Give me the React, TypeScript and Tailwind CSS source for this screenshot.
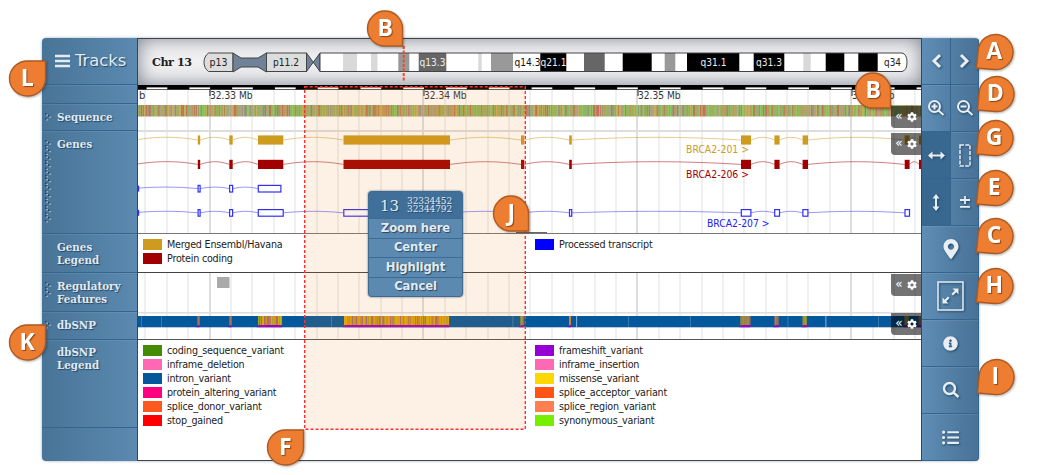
import React from "react";
import { FaMapMarkerAlt, FaInfoCircle, FaListUl, FaCog } from "react-icons/fa";

const SANS = "font-['DejaVu_Sans',sans-serif]";
const GRID = Array.from({ length: 37 }, (_, i) => ({ x: 145.4 + i * 21.39, major: i % 10 === 3 }));

// Small integer hash, gives an even spread for the base and variant stripes.
function spread(n: number, size: number) {
  let h = Math.imul(n + 17, 0x9e3779b1);
  h ^= h >>> 15;
  h = Math.imul(h, 0x85ebca6b);
  h ^= h >>> 13;
  return (h >>> 0) % size;
}

function Grid({ y, h }: { y: number; h: number }) {
  return (
    <g>
      {GRID.map((g) => (
        <rect key={g.x} x={Math.round(g.x) - 0.5} y={y} width={1} height={h} fill={g.major ? "#bcbcbc" : "#e2e2e2"} />
      ))}
    </g>
  );
}

function Canvas({ y, h, children }: { y: number; h: number; children?: React.ReactNode }) {
  return (
    <svg className="block" width={784} height={h} viewBox={`138 ${y} 784 ${h}`}>
      {children}
    </svg>
  );
}

const BANDS: [number, number, string][] = [
  [343, 357, "#d9d9d9"], [371, 377.5, "#d9d9d9"], [398.3, 409.3, "#999"], [418.7, 446.3, "#666"],
  [478.3, 481.7, "#d9d9d9"], [491, 513, "#999"], [540.3, 566.3, "#000"], [584, 604.7, "#666"],
  [622.7, 651.7, "#000"], [664.7, 675.3, "#999"], [687, 739.3, "#000"], [753.7, 784.3, "#000"],
  [803.3, 810.7, "#d9d9d9"], [825.7, 844.3, "#000"], [858.3, 877.7, "#000"],
];

const BAND_LABELS: [number, string, string][] = [
  [218.5, "p13", "#222"], [286, "p11.2", "#222"], [432.5, "q13.3", "#eee"], [527.5, "q14.3", "#111"],
  [553.5, "q21.1", "#eee"], [713.5, "q31.1", "#eee"], [769, "q31.3", "#eee"], [892.5, "q34", "#222"],
];

function Chromosome() {
  return (
    <Canvas y={38} h={47}>
      <text x={152} y={66} fontSize={11.2} fontWeight="bold" fontFamily="DejaVu Serif" fill="#222" textLength={40}>Chr 13</text>
      <path d="M208.500 53H233V71.500H208.500Q204 68 204 62.200Q204 56.500 208.500 53Z" fill="#ddd" stroke="#444" />
      <path d="M233 53L241 58H258L266.500 53V72L258 67H241L233 72Z" fill="#6f8297" stroke="#444" />
      <rect x={266.5} y={53} width={40} height={18.5} fill="#ddd" stroke="#444" />
      <path d="M306.500 53L320 71.500V53L306.500 71.500Z" fill="#6f8297" stroke="#444" />
      <path d="M320 53H902Q907 54 907 62.200Q907 70.500 902 71.500H320Z" fill="#fff" />
      {BANDS.map(([a, b, c]) => <rect key={a} x={a} y={53} width={b - a} height={18.5} fill={c} />)}
      <path d="M320 53H902Q907 54 907 62.200Q907 70.500 902 71.500H320Z" fill="none" stroke="#444" />
      {BAND_LABELS.map(([x, t, c]) => (
        <text key={t} x={x} y={65.5} fontSize={10} fontFamily="DejaVu Sans" fill={c} textAnchor="middle" textLength={t.length === 5 ? 26 : t === "p13" ? 18 : 17} lengthAdjust="spacingAndGlyphs">{t}</text>
      ))}
      <path d="M403.700 46V82" stroke="#f04a2a" strokeWidth={2} strokeDasharray="3 1.500" />
    </Canvas>
  );
}

const SEQ = ["#9cb45c", "#b99a5a", "#8fb85e", "#bd8158", "#a1ab6a", "#b0a08a", "#93b066", "#c1b15c", "#c5705e", "#9a9a7a", "#8fc862", "#b0a860"];

function Ruler() {
  return (
    <Canvas y={85} h={46}>
      <Grid y={90} h={41} />
      <rect x={138} y={85} width={784} height={4.8} fill="#000" />
      {Array.from({ length: 19 }, (_, i) => (
        <rect key={i} x={146.6 + i * 42.78} y={87.4} width={20.7} height={1.8} fill="#fff" />
      ))}
      {[[210, "32.33 Mb"], [424, "32.34 Mb"], [638, "32.35 Mb"], [852, "32.36 Mb"]].map(([x, t]) => (
        <g key={t}>
          <rect x={Number(x) - 0.5} y={89} width={1} height={7} fill="#222" />
          <text x={x} y={99} fontSize={10} fontFamily="DejaVu Sans" fill="#333" textLength={42.500} lengthAdjust="spacingAndGlyphs">{t}</text>
        </g>
      ))}
      <text x={139} y={99} fontSize={10} fontFamily="DejaVu Sans" fill="#333">b</text>
      {Array.from({ length: 784 }, (_, i) => (
        <rect key={i} x={138 + i} y={105} width={1.05} height={11.5} fill={SEQ[spread(i, SEQ.length)]} />
      ))}
      <rect x={138} y={130} width={784} height={1} fill="#ddd" />
    </Canvas>
  );
}

const EXONS: [number, number][] = [
  [197.8, 200.2], [229.3, 232.7], [258, 283.3], [343.5, 450], [521, 524.2], [569.2, 571.8],
  [741, 751], [774.4, 779.6], [802.6, 808], [904.7, 909.6], [919, 922],
];

function Transcript({ y, color, exons, outline }: { y: number; color: string; exons: [number, number][]; outline?: boolean }) {
  let previous = 138;
  return (
    <g>
      {exons.map(([a, b]) => {
        const start = previous;
        previous = b;
        const top = outline ? y - 2 : y - 3.6;
        const from = start === 138 ? y - 0.5 : y;
        return (
          <g key={a}>
            <path d={`M${start} ${from}C${start + (a - start) * 0.35} ${top} ${a - (a - start) * 0.35} ${top} ${a} ${y}`} fill="none" stroke={color} strokeOpacity={0.5} />
            {outline
              ? <rect x={a + 0.3} y={y - 3.2} width={b - a - 0.4} height={6.6} fill="#fff" stroke={color} strokeWidth={1.2} />
              : <rect x={a} y={y - 4.6} width={b - a} height={9.2} fill={color} />}
          </g>
        );
      })}
      {outline && <rect x={138} y={y - 3} width={1.2} height={6} fill={color} />}
    </g>
  );
}

function Genes() {
  return (
    <Canvas y={131} h={103}>
      <Grid y={131} h={102} />
      <rect x={138} y={131} width={784} height={1} fill="#ddd" />
      <Transcript y={140} color="#cd9b1d" exons={EXONS} />
      <Transcript y={164.400} color="#a00000" exons={EXONS} />
      <Transcript y={188.600} color="#3030fa" outline exons={[[197.8, 200.2], [229.3, 232.7], [258, 281]]} />
      <Transcript y={212.800} color="#3030fa" outline exons={EXONS.slice(0, 10)} />
      <g fontSize={10} fontFamily="DejaVu Sans">
        <text x={686} y={153} fill="#cd9b1d" textLength={63} lengthAdjust="spacingAndGlyphs">BRCA2-201 &gt;</text>
        <text x={686} y={177.500} fill="#a00000" textLength={63} lengthAdjust="spacingAndGlyphs">BRCA2-206 &gt;</text>
        <text x={707} y={226.500} fill="#2020fa" textLength={62.500} lengthAdjust="spacingAndGlyphs">BRCA2-207 &gt;</text>
      </g>
      <rect x={516} y={232} width={31} height={2} fill="#666" />
      <rect x={138} y={233} width={784} height={1} fill="#777" />
    </Canvas>
  );
}

function Variants() {
  const clusters: [number, number][] = [[197.5, 199.5], [229.5, 231.5], [258, 282], [344, 449], [520.5, 523.5], [569, 571], [740.5, 750.5], [774.5, 778.7], [802.6, 807], [904.5, 908], [918.5, 922]];
  const shades = ["#dba00e", "#c9b010", "#bd7c4c", "#d99018", "#c58a3c", "#b06a68", "#e0aa08", "#a8a028"];
  return (
    <Canvas y={312} h={28}>
      <Grid y={312} h={27} />
      <rect x={138} y={312} width={784} height={1.500} fill="#ddd" />
      <rect x={138} y={316} width={784} height={11.3} fill="#04589b" />
      {[141, 161, 331, 512.5, 576.3, 628, 690, 787.5, 825.5, 878].map((x, i) => (
        <rect key={x} x={x} y={316} width={0.8} height={11.3} fill="#fff" opacity={i === 4 || i === 8 ? 0.7 : 0.25} />
      ))}
      {clusters.map(([a, b], k) => (
        <g key={a}>
          {Array.from({ length: Math.max(1, Math.round(b - a)) }, (_, i) => (
            <rect key={i} x={a + i} y={316} width={1.05} height={9.5} fill={b - a < 3 ? "#d98030" : shades[spread(i + k * 131, shades.length)]} />
          ))}
          <path d={`M${a - 1.500} 327.300L${a + 1} 325H${b}V327.300Z`} fill="#a200b8" />
        </g>
      ))}
      <rect x={138} y={339} width={784} height={1} fill="#555" />
    </Canvas>
  );
}

function Legend({ items }: { items: [string, string][] }) {
  return (
    <ul className="flex w-[393px] flex-col gap-[3px] pl-[5px] pt-[5px]">
      {items.map(([color, label]) => (
        <li key={label} className="flex h-[11px] items-center gap-[5px]">
          <svg width="19" height="11"><rect width="19" height="11" fill={color} /></svg>
          <span className="whitespace-nowrap text-[9.600px] leading-[11px] tracking-[-0.22px] text-[#222]">{label}</span>
        </li>
      ))}
    </ul>
  );
}

function Grip({ rows }: { rows: number }) {
  return (
    <svg className="absolute left-[3px] top-[9px]" width="8" height={rows * 7.5 + 2}>
      {Array.from({ length: rows }, (_, i) => (
        <g key={i} transform={`translate(0 ${i * 7.5})`}>
          <path d="M0 0h1.500v1.500h-1.500zM3 2h1.500v1.500h-1.500zM0 5h1.500v1.500h-1.500z" fill="#23435f" />
          <path d="M1.500 1.500h1.200v1.200h-1.200zM4.500 3.500h1.200v1.200h-1.200zM1.500 6.300h1.200v1.200h-1.200z" fill="#c5d6e4" />
        </g>
      ))}
    </svg>
  );
}

function TrackLabel({ className, grips = 0, children }: { className: string; grips?: number; children?: React.ReactNode }) {
  return (
    <div className={`relative border-b border-[#32658f] pl-[15px] font-['DejaVu_Serif',serif] text-[10.300px] font-bold leading-[12.5px] text-[#e3eaf0] shadow-[inset_0_1px_0_rgba(255,255,255,0.08)] [text-shadow:1px_1px_1px_#234766] ${className}`}>
      {grips > 0 && <Grip rows={grips} />}
      {children}
    </div>
  );
}

function Controls({ className }: { className: string }) {
  return (
    <div className={`absolute right-0 flex h-[22px] w-[30px] items-center justify-center gap-[4px] rounded-bl-sm bg-black/55 text-white ${className}`}>
      <span className="-mt-[3px] text-[12px] leading-none">«</span>
      <FaCog size={10} />
    </div>
  );
}

function Button({ active, children }: { active?: boolean; children: React.ReactNode }) {
  return (
    <button className={`flex min-w-0 flex-1 items-center justify-center border-b border-r border-[#32658f] pl-px text-[#e8eef3] ${active ? "bg-[#386790]" : "shadow-[inset_0_1px_0_rgba(255,255,255,0.08)]"}`}>
      <span className="[filter:drop-shadow(1px_1px_1px_#234766)]">{children}</span>
    </button>
  );
}

function Stroke({ d, w = 18, h = 18, sw = 2, dash }: { d: string; w?: number; h?: number; sw?: number; dash?: string }) {
  return (
    <svg width={w} height={h} viewBox={`0 0 ${w} ${h}`} className="block">
      <path d={d} fill="none" stroke="currentColor" strokeWidth={sw} strokeDasharray={dash} />
    </svg>
  );
}

const LENS = "M13 7.500A5.500 5.500 0 1 1 2 7.500A5.500 5.500 0 1 1 13 7.500M11.500 11.500L16.500 16";

function Toolbar() {
  const row = "flex h-[47px]";
  return (
    <aside className="w-[57px] shrink-0 overflow-hidden rounded-r-[4px] bg-gradient-to-r from-[#5e8db5] to-[#487196]">
      <div className={row}>
        <Button><Stroke w={12} h={16} sw={3} d="M10 2L4 8L10 14" /></Button>
        <Button><Stroke w={12} h={16} sw={3} d="M2 2L8 8L2 14" /></Button>
      </div>
      <div className={row}>
        <Button><Stroke d={LENS + "M4.500 7.500H10.500M7.500 4.500V10.500"} /></Button>
        <Button><Stroke d={LENS + "M4.500 7.500H10.500"} /></Button>
      </div>
      <div className={row}>
        <Button active>
          <svg width="17" height="9" className="block"><path d="M0 4.500L4.500 0.500V3.500H12.500V0.500L17 4.500L12.500 8.500V5.500H4.500V8.500Z" fill="currentColor" /></svg>
        </Button>
        <Button><Stroke w={12} h={23} sw={1.5} dash="4 1.300" d="M1 1H11V22H1Z" /></Button>
      </div>
      <div className={row}>
        <Button active>
          <svg width="8" height="17" className="block"><path d="M4 0L7.500 4.500H5V12.500H7.500L4 17L0.500 12.500H3V4.500H0.500Z" fill="currentColor" /></svg>
        </Button>
        <Button><Stroke w={12} h={12} sw={1.8} d="M6 0V8M1 4H11M1 10.800H11" /></Button>
      </div>
      <div className={row}><Button><FaMapMarkerAlt size={20} /></Button></div>
      <div className={row}>
        <Button>
          <svg width="27" height="30" className="block">
            <rect x="1" y="1" width="25" height="28" fill="none" stroke="currentColor" strokeWidth="1.500" />
            <path d="M21.500 7.500V13.500L19.300 11.300L16 14.600L14.400 13L17.700 9.700L15.500 7.500ZM5.500 22.500V16.500L7.700 18.700L11 15.400L12.600 17L9.300 20.300L11.500 22.500Z" fill="currentColor" />
          </svg>
        </Button>
      </div>
      <div className={row}><Button><FaInfoCircle size={15} /></Button></div>
      <div className={row}><Button><Stroke d={LENS} sw={2.400} /></Button></div>
      <div className={row}><Button><FaListUl size={17} /></Button></div>
    </aside>
  );
}

function Popup() {
  const item = "flex h-[19.6px] items-center justify-center border-t border-[#3c6b94] bg-[#5c89b0] text-[11.600px] font-bold tracking-[-0.1px]";
  return (
    <div className="absolute left-[368px] top-[191px] w-[95px] overflow-hidden rounded-[4px] border border-[#3c6b94] bg-[#407099] text-[#e3eaf0] shadow-[0_0_2px_#456] [text-shadow:1px_1px_1px_#234766]">
      <div className="flex h-[26px] items-center justify-center gap-[8px] pl-[1px] font-['DejaVu_Serif',serif]">
        <span className="pt-[3px] text-[15px]">13</span>
        <span className="text-[9px] leading-[8px] tracking-[-0.1px]">32334452<br />32344792</span>
      </div>
      {["Zoom here", "Center", "Highlight", "Cancel"].map((t) => <div key={t} className={item}>{t}</div>)}
    </div>
  );
}

const CORNERS = {
  br: "M36 36H18A17.500 17.500 0 1 1 36 18Z",
  tr: "M37 1V19A18 17.500 0 1 1 19 1Z",
  bl: "M1 35L3 15A17.500 17.500 0 1 1 19 36.500Z",
};

const MARKERS: [string, number, number, keyof typeof CORNERS][] = [
  ["B", 367, 10, "br"], ["L", 9, 60, "tr"], ["K", 9, 324, "tr"], ["F", 267, 429, "tr"], ["J", 493, 195, "br"],
  ["B", 855, 72, "br"], ["A", 976, 33, "bl"], ["D", 977, 75, "bl"], ["G", 976, 119, "bl"], ["E", 976, 169, "bl"],
  ["C", 976, 217, "bl"], ["H", 976, 267, "bl"], ["I", 977, 358, "bl"],
];

function Markers() {
  return (
    <svg className="absolute left-0 top-0 [filter:drop-shadow(1px_1px_1px_rgba(0,0,0,0.3))]" width="1039" height="475">
      {MARKERS.map(([t, x, y, corner]) => (
        <g key={t + x} transform={`translate(${x - 0.5} ${y})`}>
          <path d={CORNERS[corner]} fill="#ed7d31" stroke="#ae5a21" strokeWidth={1.4} />
          <text x={18.700} y={26.300} fontSize={23} fontWeight="bold" fontFamily="Open Sans" textAnchor="middle" fill="#fff" className="[text-shadow:1px_1px_1px_#8d4312]">{t}</text>
        </g>
      ))}
    </svg>
  );
}

export default function App() {
  return (
    <div className={`relative h-[475px] w-[1039px] overflow-hidden bg-white px-[42px] pt-[38px] ${SANS}`}>
      <main className="flex h-[423px] w-[937px] rounded-[5px] shadow-[0_0_3px_#9ab]">
        <aside className="flex w-[95px] shrink-0 flex-col overflow-hidden rounded-l-[4px] bg-gradient-to-r from-[#487497] to-[#5b89b0]">
          <div className="flex h-[47px] items-center gap-[5px] border-b border-[#32658f] pl-[13px] text-[#e3eaf0] [text-shadow:1px_1px_1px_#234766]">
            <Stroke w={15} h={14} sw={2.4} d="M0 2H15M0 7H15M0 12H15" />
            <span className="pt-px text-[16.500px] tracking-[-0.1px]">Tracks</span>
          </div>
          <TrackLabel className="h-[19px]" />
          <TrackLabel className="h-[27px] pt-[7px]" grips={1}>Sequence</TrackLabel>
          <TrackLabel className="h-[103px] pt-[7px]" grips={11}>Genes</TrackLabel>
          <TrackLabel className="h-[39px] pt-[7px]">Genes<br />Legend</TrackLabel>
          <TrackLabel className="h-[39px] pt-[7px]" grips={2}>Regulatory<br />Features</TrackLabel>
          <TrackLabel className="h-[28px] pt-[7px]" grips={1}>dbSNP</TrackLabel>
          <TrackLabel className="h-[88px] pt-[6px]">dbSNP<br />Legend</TrackLabel>
          <div className="flex-1" />
        </aside>
        <section className="relative w-[785px] shrink-0 overflow-hidden border-x border-y border-[#444] bg-white">
          <div className="-mt-px w-[784px]">
            <div className="bg-[#f1f1f3] shadow-[inset_0_0_19px_#777d88]"><Chromosome /></div>
            <Ruler />
            <Genes />
            <div className="flex h-[39px] border-b border-[#444]">
              <Legend items={[["#cd9b1d", "Merged Ensembl/Havana"], ["#a00000", "Protein coding"]]} />
              <Legend items={[["#0000ff", "Processed transcript"]]} />
            </div>
            <Canvas y={273} h={39}>
              <Grid y={273} h={39} />
              <rect x={217} y={277} width={12.500} height={11} fill="#aaa" />
            </Canvas>
            <Variants />
            <div className="flex h-[121px]">
              <Legend items={[["#458b00", "coding_sequence_variant"], ["#ff69b4", "inframe_deletion"], ["#04589b", "intron_variant"], ["#ff0080", "protein_altering_variant"], ["#ff581f", "splice_donor_variant"], ["#ff0000", "stop_gained"]]} />
              <Legend items={[["#9400d3", "frameshift_variant"], ["#ff69b4", "inframe_insertion"], ["#ffd700", "missense_variant"], ["#ff5414", "splice_acceptor_variant"], ["#ff7f50", "splice_region_variant"], ["#76ee00", "synonymous_variant"]]} />
            </div>
          </div>
          <Controls className="top-[67px]" />
          <Controls className="top-[94px]" />
          <Controls className="top-[235px]" />
          <Controls className="top-[274px]" />
        </section>
        <Toolbar />
      </main>
      <svg className="absolute left-[304px] top-[86px]" width="222" height="344">
        <rect x="0.700" y="0.700" width="220.600" height="342.600" fill="#f08020" fillOpacity="0.12" stroke="#ff3030" strokeWidth="1.400" strokeDasharray="3 2" />
      </svg>
      <Popup />
      <Markers />
    </div>
  );
}
